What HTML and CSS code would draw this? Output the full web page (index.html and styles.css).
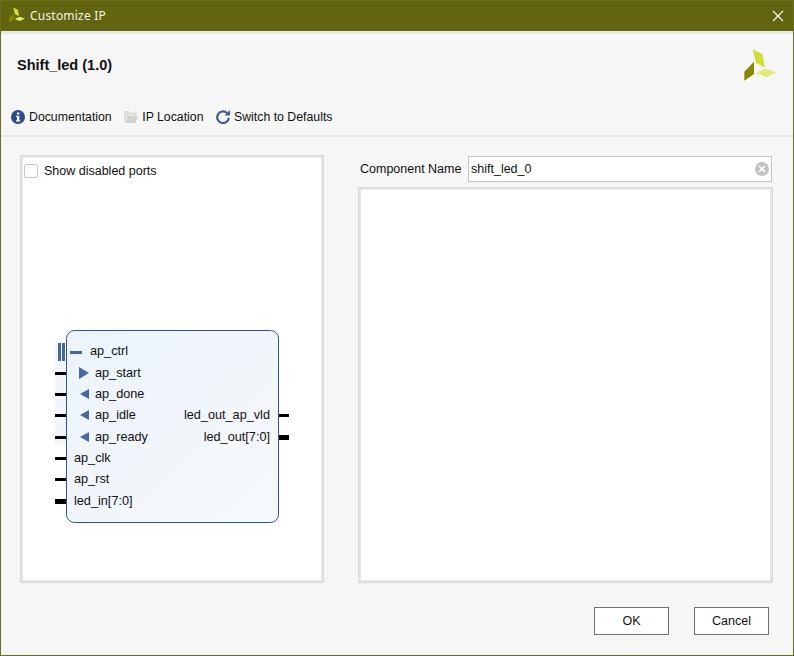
FILE: index.html
```html
<!DOCTYPE html>
<html lang="en">
<head>
<meta charset="utf-8">
<title>Customize IP</title>
<link rel="stylesheet" href="styles.css">
</head>
<body>
<div class="window">
  <div class="titlebar">
    <svg class="title-logo" viewBox="744 49 33 32" aria-hidden="true">
      <polygon class="leaf-a" points="752.7,49.3 762.3,54 765,67.7 756,62.7"/>
      <polygon class="leaf-b" points="754,61.7 754,74 744.3,80.7 744.3,71.7"/>
      <polygon class="leaf-c" points="765,68.7 776.7,72.3 766.7,77.3 755.7,73.3"/>
    </svg>
    <span class="title-text">Customize IP</span>
    <svg class="close" viewBox="0 0 12 12" aria-hidden="true"><path d="M1 1 11 11M11 1 1 11"/></svg>
  </div>
  <div class="header">
    <div class="head-row">
      <h1 class="ip-name">Shift_led (1.0)</h1>
      <svg class="big-logo" viewBox="744 49 33 32" aria-hidden="true">
        <polygon class="leaf-a" points="752.7,49.3 762.3,54 765,67.7 756,62.7"/>
        <polygon class="leaf-b" points="754,61.7 754,74 744.3,80.7 744.3,71.7"/>
        <polygon class="leaf-c" points="765,68.7 776.7,72.3 766.7,77.3 755.7,73.3"/>
      </svg>
    </div>
    <div class="toolbar">
      <span class="tool">
        <svg class="tool-icon" viewBox="0 0 14 14" aria-hidden="true">
          <circle class="info-disc" cx="7" cy="7" r="7"/>
          <path class="info-mark" d="M6 2.600h2.300v2H6zM5.200 5.800h3.100v4.400h.9v1.200H5v-1.200h.9V7h-.7z"/>
        </svg>Documentation</span>
      <span class="tool">
        <svg class="tool-icon" viewBox="0 0 14 14" aria-hidden="true">
          <path class="folder-back" d="M0 1h5l1 1.500h6.500V5.500H3L0 12z"/>
          <path class="folder-front" d="M3.500 6H14L11.500 13H0.500z"/>
        </svg>IP Location</span>
      <span class="tool">
        <svg class="tool-icon" viewBox="0 0 14 14" aria-hidden="true">
          <path class="refresh-arc" d="M11 3A5.800 5.800 0 1 0 12.800 7.800"/>
          <path class="refresh-head" d="M8.500 5.200 14 5.400 13.800 0z"/>
        </svg>Switch to Defaults</span>
    </div>
  </div>
  <div class="main">
    <div class="panel preview">
      <label class="check-row"><span class="checkbox"></span>Show disabled ports</label>
      <svg class="diagram" viewBox="23 320 298 210" role="img">
        <defs>
          <linearGradient id="blockFill" x1="0" y1="0" x2="1" y2="1">
            <stop offset="0" stop-color="#ecf3fb"/>
            <stop offset="1" stop-color="#f6f9fc"/>
          </linearGradient>
        </defs>
        <rect class="bus-halo" x="55" y="343" width="11" height="102"/>
        <rect class="ctrl-bar" x="58" y="343" width="3" height="18"/>
        <rect class="ctrl-bar" x="62" y="343" width="3" height="18"/>
        <rect x="66.500" y="330.500" width="212" height="192" rx="8" fill="url(#blockFill)" class="block"/>
        <rect class="ctrl-bar" x="70" y="351" width="12" height="3"/>
        <polygon class="arrow" points="79,367 89,373 79,379"/>
        <polygon class="arrow" points="89,389 80,394 89,399"/>
        <polygon class="arrow" points="89,410 80,415 89,420"/>
        <polygon class="arrow" points="89,432 80,437 89,442"/>
        <rect class="pin" x="55" y="372" width="11" height="3"/>
        <rect class="pin" x="55" y="393" width="11" height="3"/>
        <rect class="pin" x="55" y="414" width="11" height="3"/>
        <rect class="pin" x="55" y="436" width="11" height="3"/>
        <rect class="pin" x="55" y="457" width="11" height="3"/>
        <rect class="pin" x="55" y="478" width="11" height="3"/>
        <rect class="pin" x="55" y="499" width="11" height="5"/>
        <rect class="pin" x="279" y="414" width="10" height="3"/>
        <rect class="pin" x="279" y="435" width="10" height="5"/>
        <text class="port" x="90" y="355">ap_ctrl</text>
        <text class="port" x="95" y="377">ap_start</text>
        <text class="port" x="95" y="398">ap_done</text>
        <text class="port" x="95" y="419">ap_idle</text>
        <text class="port" x="95" y="441">ap_ready</text>
        <text class="port" x="74" y="462">ap_clk</text>
        <text class="port" x="74" y="483">ap_rst</text>
        <text class="port" x="74" y="505">led_in[7:0]</text>
        <text class="port port-out" x="270" y="419">led_out_ap_vld</text>
        <text class="port port-out" x="270" y="441">led_out[7:0]</text>
      </svg>
    </div>
    <div class="config">
      <div class="name-row">
        <span class="name-label">Component Name</span>
        <div class="name-input">
          <span>shift_led_0</span>
          <svg class="clear" viewBox="0 0 14 14" aria-hidden="true">
            <circle class="clear-disc" cx="7" cy="7" r="7"/>
            <path class="clear-x" d="M4 4 10 10M10 4 4 10"/>
          </svg>
        </div>
      </div>
      <div class="panel params"></div>
    </div>
  </div>
  <div class="footer">
    <button class="btn">OK</button>
    <button class="btn">Cancel</button>
  </div>
</div>
</body>
</html>
```
FILE: styles.css
```css
* { box-sizing: border-box; }
html, body { margin: 0; padding: 0; }
body {
  width: 794px;
  height: 656px;
  overflow: hidden;
  font-family: "Liberation Sans", Arial, sans-serif;
  font-size: 12.5px;
  color: #111;
}
.window {
  width: 794px;
  height: 656px;
  display: flex;
  flex-direction: column;
  background: #f6f6f6;
  border: 1px solid #6b6e1c;
}
.titlebar {
  flex: none;
  height: 30px;
  display: flex;
  align-items: center;
  padding: 0 9px 0 8px;
  background: #62640f;
  color: #f2f2e6;
}
.title-logo { width: 16px; height: 16px; flex: none; margin-bottom: 2px; }
.title-text {
  margin: 0 0 1px 5px;
  font-family: "Noto Sans", sans-serif;
  font-size: 12px;
  letter-spacing: 0.2px;
}
.close { width: 12px; height: 12px; margin-left: auto; fill: none; stroke: #fff; stroke-width: 1.2; }
.leaf-a { fill: #d2dd36; }
.leaf-b { fill: #858a00; }
.leaf-c { fill: #e3ea7c; }
.header {
  flex: none;
  border-top: 3px solid #e7e7e7;
  border-bottom: 2px solid #e6e6e6;
}
.head-row {
  height: 62px;
  display: flex;
  align-items: center;
  justify-content: space-between;
  padding: 0 16px;
}
.ip-name { margin: 0; font-size: 14.500px; font-weight: 700; color: #111; }
.big-logo { width: 33px; height: 32px; flex: none; }
.toolbar {
  height: 36px;
  margin-top: 3px;
  display: flex;
  align-items: center;
  gap: 12.500px;
  padding-left: 10px;
  font-size: 12.300px;
}
.tool { display: flex; align-items: center; gap: 4px; white-space: nowrap; }
.tool-icon { width: 14px; height: 14px; flex: none; }
.info-disc { fill: #2f4b87; }
.info-mark { fill: #fff; }
.folder-back { fill: #dcdcdc; }
.folder-front { fill: #d2d2d2; }
.refresh-arc { fill: none; stroke: #3e5b8f; stroke-width: 2.200; }
.refresh-head { fill: #3e5b8f; }
.main {
  flex: 1;
  min-height: 0;
  display: flex;
  gap: 34px;
  padding: 18px 20px 0 19px;
}
.panel {
  background: #fff;
  border: 3px solid #e6e6e6;
  outline: 1px solid #d8d8d8;
  outline-offset: -1px;
}
.preview {
  width: 304px;
  height: 428px;
  display: flex;
  flex-direction: column;
  justify-content: space-between;
}
.check-row {
  display: flex;
  align-items: center;
  gap: 6px;
  height: 14px;
  margin: 6px 0 0 1px;
}
.checkbox {
  width: 14px;
  height: 14px;
  background: #fff;
  border: 1px solid #c8c8c8;
  border-radius: 2px;
}
.diagram { display: block; width: 298px; height: 210px; margin-bottom: 50px; }
.bus-halo { fill: #f1f6fc; }
.ctrl-bar { fill: #46689f; }
.block { stroke: #2f5597; stroke-width: 1; }
.arrow { fill: #4669a5; }
.pin { fill: #000; }
.port { font-family: "Liberation Sans", Arial, sans-serif; font-size: 12.700px; fill: #111; }
.port-out { text-anchor: end; }
.config {
  flex: 1;
  min-width: 0;
  height: 428px;
  display: flex;
  flex-direction: column;
  gap: 5px;
  padding-top: 1px;
}
.name-row { flex: none; height: 26px; display: flex; align-items: center; gap: 6px; padding: 0 1px 0 2px; }
.name-label { width: 102px; white-space: nowrap; }
.name-input {
  flex: 1;
  height: 26px;
  display: flex;
  align-items: center;
  justify-content: space-between;
  padding: 0 2px 0 2px;
  background: #fff;
  border: 1px solid #c4c4c4;
}
.clear { width: 14px; height: 14px; }
.clear-disc { fill: #c2c2c4; }
.clear-x { fill: none; stroke: #fff; stroke-width: 1.600; }
.params { flex: 1; }
.footer {
  flex: none;
  height: 72px;
  display: flex;
  justify-content: flex-end;
  align-items: flex-start;
  gap: 25px;
  padding: 24px 24px 0 0;
}
.btn {
  width: 75px;
  height: 28px;
  padding: 0;
  background: #fff;
  border: 1px solid #6e6e6e;
  border-radius: 0;
  font: inherit;
  color: #111;
}
```
